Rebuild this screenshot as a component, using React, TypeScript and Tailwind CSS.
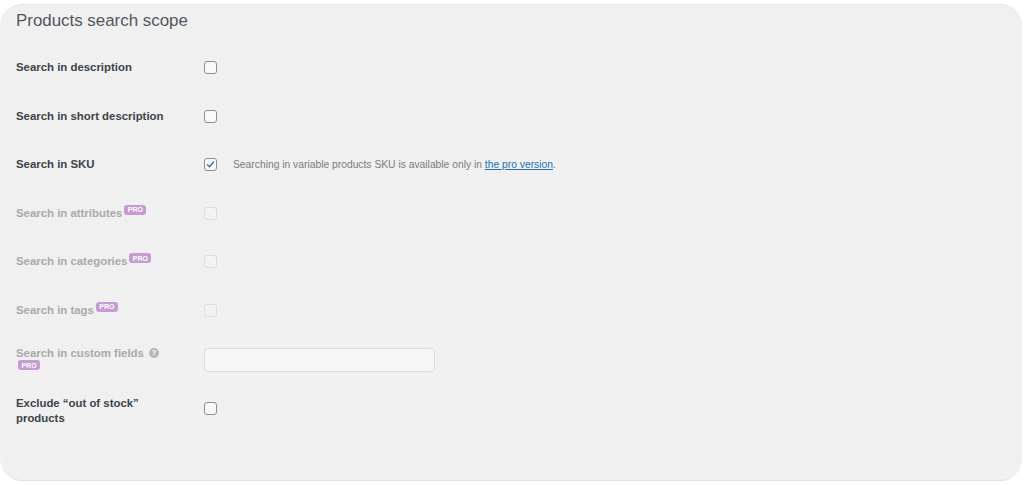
import React from "react";

const font = { fontFamily: '"Liberation Sans", Arial, sans-serif' };

function ProBadge({ className = "" }: { className?: string }) {
  return (
    <span
      className={
        "inline-flex h-[10px] w-[22px] items-center justify-center rounded-[3px] bg-[#c59bd2] text-[7px] font-bold leading-none text-white " +
        className
      }
    >
      PRO
    </span>
  );
}

function Checkbox({ checked = false, disabled = false }: { checked?: boolean; disabled?: boolean }) {
  return (
    <span
      className={
        "flex h-[13px] w-[13px] items-center justify-center rounded-[3px] border " +
        (disabled ? "border-[#dcdcde] bg-[#f3f3f3]" : "border-[#8c8f94] bg-[#f8f8f8]")
      }
    >
      {checked && (
        <svg viewBox="0 0 20 20" className="h-[11px] w-[11px]">
          <path d="M4.5 10.5 L8.2 14 L15.5 5.5" fill="none" stroke="#2271b1" strokeWidth="2.4" strokeLinecap="round" strokeLinejoin="round" />
        </svg>
      )}
    </span>
  );
}

type Row = {
  label: React.ReactNode;
  disabled?: boolean;
  pro?: boolean;
  control: React.ReactNode;
};

export default function App() {
  const rows: Row[] = [
    { label: "Search in description", control: <Checkbox /> },
    { label: "Search in short description", control: <Checkbox /> },
    {
      label: "Search in SKU",
      control: (
        <div className="flex items-center">
          <Checkbox checked />
          <span className="ml-[16px] text-[10.3px] text-[#787c82]">
            Searching in variable products SKU is available only in{" "}
            <a className="text-[#2271b1] underline">the pro version</a>.
          </span>
        </div>
      ),
    },
    { label: "Search in attributes", disabled: true, pro: true, control: <Checkbox disabled /> },
    { label: "Search in categories", disabled: true, pro: true, control: <Checkbox disabled /> },
    { label: "Search in tags", disabled: true, pro: true, control: <Checkbox disabled /> },
  ];

  return (
    <div className="h-[485px] w-[1024px] bg-white pt-[4px]" style={font}>
      <div className="h-[476px] w-[1022px] rounded-[22px] border-t border-[#e4e4e4] bg-[#f0f0f0] shadow-[0_2px_1px_-1px_rgba(0,0,0,0.12)]">
        <h2 className="px-4 pt-[5px] text-[16.9px] leading-[22px] font-normal text-[#50575e]">
          Products search scope
        </h2>
        <div className="mt-[11.5px] flex flex-col">
          {rows.map((r, i) => (
            <div key={i} className="flex h-[48.5px] items-center pl-4">
              <div
                className={
                  "w-[188px] text-[11.4px] font-bold leading-[15px] " +
                  (r.disabled ? "text-[#a7aaad]" : "text-[#3c434a]")
                }
              >
                {r.label}
                {r.pro && <ProBadge className="relative -top-[4px] ml-[2px] align-middle" />}
              </div>
              {r.control}
            </div>
          ))}
          <div className="flex h-[50px] items-center pl-4">
            <div className="w-[188px] text-[11.4px] font-bold leading-[14px] text-[#a7aaad]">
              <div className="flex items-center">
                Search in custom fields
                <span className="ml-[5px] flex h-[10px] w-[10px] items-center justify-center rounded-full bg-[#b4b7ba] text-[8px] leading-none text-white">
                  ?
                </span>
              </div>
              <ProBadge className="relative -top-[3px] ml-[2px]" />
            </div>
            <div className="h-[24px] w-[231px] rounded-[4px] border border-[#dcdcde] bg-[#f6f6f6]" />
          </div>
          <div className="mt-[1px] flex h-[50px] items-center pl-4">
            <div className="w-[188px] pr-[24px] text-[11.4px] font-bold leading-[15px] text-[#3c434a]">
              Exclude “out of stock” products
            </div>
            <div className="-mt-[4px]">
              <Checkbox />
            </div>
          </div>
        </div>
      </div>
    </div>
  );
}
